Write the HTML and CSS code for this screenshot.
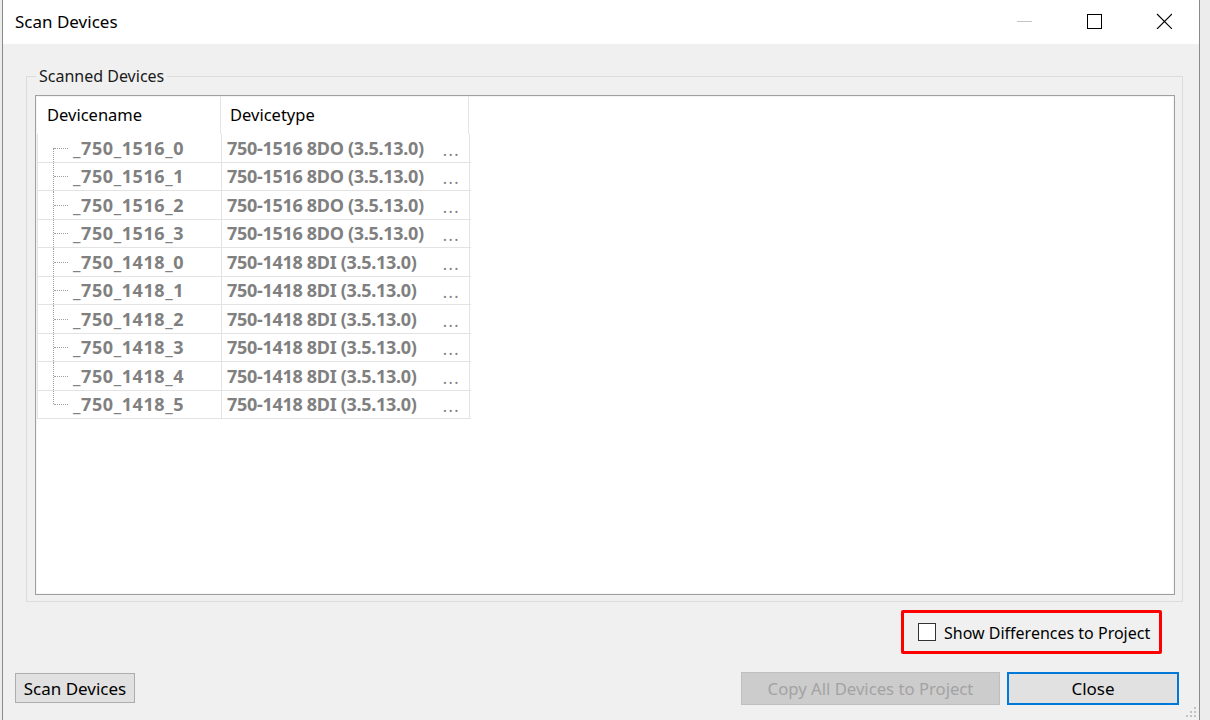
FILE: index.html
```html
<!DOCTYPE html>
<html>
<head>
<meta charset="utf-8">
<link rel="stylesheet" href="styles.css">
</head>
<body>
<div class="window">
  <div class="titlebar">
    <div class="title">Scan Devices</div>
    <div class="caption-buttons">
      <div class="cap-btn"><svg width="16" height="16" viewBox="0 0 16 16"><line x1="1" y1="8.5" x2="16" y2="8.5" stroke="#c4c4c4" stroke-width="1"/></svg></div>
      <div class="cap-btn"><svg width="16" height="16" viewBox="0 0 16 16"><rect x="1.5" y="1.5" width="14" height="14" fill="none" stroke="#000" stroke-width="1"/></svg></div>
      <div class="cap-btn"><svg width="16" height="16" viewBox="0 0 16 16"><path d="M1 1 L16 16 M16 1 L1 16" stroke="#000" stroke-width="1.1"/></svg></div>
    </div>
  </div>
  <div class="client">
    <fieldset class="group">
      <legend>Scanned Devices</legend>
      <div class="listview">
        <div class="header">
          <div class="hcell c1">Devicename</div>
          <div class="hcell c2">Devicetype</div>
        </div>
        <div class="rows">
          <div class="row first"><div class="cell c1"><span class="tree"></span><span class="name">_750_1516_0</span></div><div class="cell c2"><span class="type">750-1516 8DO (3.5.13.0)</span><span class="more">...</span></div></div>
          <div class="row"><div class="cell c1"><span class="tree"></span><span class="name">_750_1516_1</span></div><div class="cell c2"><span class="type">750-1516 8DO (3.5.13.0)</span><span class="more">...</span></div></div>
          <div class="row"><div class="cell c1"><span class="tree"></span><span class="name">_750_1516_2</span></div><div class="cell c2"><span class="type">750-1516 8DO (3.5.13.0)</span><span class="more">...</span></div></div>
          <div class="row"><div class="cell c1"><span class="tree"></span><span class="name">_750_1516_3</span></div><div class="cell c2"><span class="type">750-1516 8DO (3.5.13.0)</span><span class="more">...</span></div></div>
          <div class="row"><div class="cell c1"><span class="tree"></span><span class="name">_750_1418_0</span></div><div class="cell c2"><span class="type">750-1418 8DI (3.5.13.0)</span><span class="more">...</span></div></div>
          <div class="row"><div class="cell c1"><span class="tree"></span><span class="name">_750_1418_1</span></div><div class="cell c2"><span class="type">750-1418 8DI (3.5.13.0)</span><span class="more">...</span></div></div>
          <div class="row"><div class="cell c1"><span class="tree"></span><span class="name">_750_1418_2</span></div><div class="cell c2"><span class="type">750-1418 8DI (3.5.13.0)</span><span class="more">...</span></div></div>
          <div class="row"><div class="cell c1"><span class="tree"></span><span class="name">_750_1418_3</span></div><div class="cell c2"><span class="type">750-1418 8DI (3.5.13.0)</span><span class="more">...</span></div></div>
          <div class="row"><div class="cell c1"><span class="tree"></span><span class="name">_750_1418_4</span></div><div class="cell c2"><span class="type">750-1418 8DI (3.5.13.0)</span><span class="more">...</span></div></div>
          <div class="row last"><div class="cell c1"><span class="tree"></span><span class="name">_750_1418_5</span></div><div class="cell c2"><span class="type">750-1418 8DI (3.5.13.0)</span><span class="more">...</span></div></div>
        </div>
      </div>
    </fieldset>
    <div class="check-row">
      <label class="highlight">
        <span class="checkbox"></span>
        <span class="check-label">Show Differences to Project</span>
      </label>
    </div>
    <div class="button-row">
      <button class="btn scan">Scan Devices</button>
      <div class="right-buttons">
        <button class="btn disabled">Copy All Devices to Project</button>
        <button class="btn default">Close</button>
      </div>
    </div>
    <div class="grip">
      <svg width="14" height="14" viewBox="0 0 14 14" fill="#c2c2c2">
        <rect x="10" y="2" width="2" height="2"/>
        <rect x="6" y="6" width="2" height="2"/><rect x="10" y="6" width="2" height="2"/>
        <rect x="2" y="10" width="2" height="2"/><rect x="6" y="10" width="2" height="2"/><rect x="10" y="10" width="2" height="2"/>
      </svg>
    </div>
  </div>
</div>
</body>
</html>
```
FILE: styles.css
```css
* { box-sizing: border-box; }
html, body { margin: 0; padding: 0; }
body {
  width: 1210px;
  height: 720px;
  overflow: hidden;
  background: #ececec;
  font-family: "Noto Sans", "Liberation Sans", sans-serif;
  font-size: 16px;
  color: #000;
  padding-left: 2px;
}
.window {
  width: 1198px;
  height: 720px;
  border-left: 1px solid #8a8a8a;
  border-right: 1px solid #8a8a8a;
  background: #f0f0f0;
  display: flex;
  flex-direction: column;
}
.titlebar {
  height: 44px;
  background: #fff;
  display: flex;
  align-items: center;
  justify-content: space-between;
  flex-shrink: 0;
}
.title {
  font-size: 17px;
  padding-left: 12px;
  padding-bottom: 1px;
}
.caption-buttons { display: flex; height: 100%; }
.cap-btn {
  width: 70px;
  height: 100%;
  display: flex;
  align-items: center;
  justify-content: center;
  padding-bottom: 2px;
}
.client {
  flex: 1;
  position: relative;
  padding: 22px 16px 0 12px;
  display: flex;
  flex-direction: column;
}
.group {
  margin: 0 0 0 11px;
  padding: 0 7px 6px 8px;
  border: 1px solid #dcdcdc;
  min-width: 0;
}
.group legend {
  margin-left: 1px;
  padding: 0 3px;
  font-size: 16px;
  line-height: 20px;
  color: #1a1a1a;
}
.listview {
  margin-top: 9px;
  height: 500px;
  background: #fff;
  border: 1px solid #a0a0a0;
  box-shadow: inset 0 0 0 1px #f4f4f4;
}
.header {
  display: flex;
  height: 38px;
  align-items: stretch;
}
.hcell {
  display: flex;
  align-items: center;
  border-right: 1px solid #e5e5e5;
  font-size: 16.5px;
  color: #000;
  padding-bottom: 2px;
}
.hcell.c1 { width: 185px; padding-left: 11px; }
.hcell.c2 { width: 248px; padding-left: 9px; }
.rows {
  margin-left: 1px;
  width: 434px;
}
.row {
  display: flex;
  height: 28.5px;
  border-bottom: 1px solid #e3e3e3;
  border-left: 1px solid #e3e3e3;
}
.cell {
  display: flex;
  align-items: center;
  height: 100%;
  font-weight: 700;
  font-size: 18px;
  color: #808080;
}
.cell.c1 { width: 184px; border-right: 1px solid #e3e3e3; }
.cell.c2 { width: 248px; border-right: 1px solid #e3e3e3; padding-left: 5px; }
.tree {
  position: relative;
  width: 35px;
  height: 100%;
  flex-shrink: 0;
}
.tree::before {
  content: "";
  position: absolute;
  left: 15px;
  top: 0;
  bottom: 0;
  border-left: 1px dotted #a0a0a0;
}
.row.first .tree::before { top: 50%; }
.row.last .tree::before { bottom: 50%; }
.tree::after {
  content: "";
  position: absolute;
  left: 16px;
  width: 14px;
  top: 50%;
  border-top: 1px dotted #a0a0a0;
}
.name { letter-spacing: 0.6px; }
.type { letter-spacing: -0.3px; }
.more {
  margin-left: auto;
  padding-right: 9px;
  padding-top: 4px;
  font-weight: 400;
  font-size: 16px;
  letter-spacing: 1.5px;
  color: #808080;
}
.check-row {
  display: flex;
  justify-content: flex-end;
  margin-top: 8px;
  padding-right: 21px;
}
.highlight {
  display: flex;
  align-items: center;
  width: 261px;
  height: 44px;
  border: 3px solid #ff0000;
  border-radius: 2px;
  padding-left: 14px;
}
.checkbox {
  width: 18px;
  height: 18px;
  border: 1px solid #333;
  background: #fff;
  margin-right: 8px;
  flex-shrink: 0;
}
.check-label { font-size: 16px; color: #000; padding-top: 1px; }
.button-row {
  display: flex;
  justify-content: space-between;
  align-items: flex-start;
  margin-top: 18px;
  padding-right: 4px;
}
.right-buttons { display: flex; gap: 7px; }
.btn {
  font-family: "Noto Sans", "Liberation Sans", sans-serif;
  font-size: 17px;
  color: #000;
  background: #e1e1e1;
  border: 1px solid #adadad;
  padding: 0;
  margin: 0;
  display: flex;
  align-items: center;
  justify-content: center;
}
.btn.scan { width: 120px; height: 30px; margin-top: 1px; }
.btn.disabled {
  width: 259px;
  height: 33px;
  background: #cccccc;
  border-color: #bfbfbf;
  color: #a3a3a3;
  font-size: 16.7px;
}
.btn.default {
  width: 172px;
  height: 33px;
  border: 2px solid #0078d7;
}
.grip {
  position: absolute;
  right: 1px;
  bottom: 1px;
  width: 14px;
  height: 14px;
}
.grip svg { display: block; }
```
